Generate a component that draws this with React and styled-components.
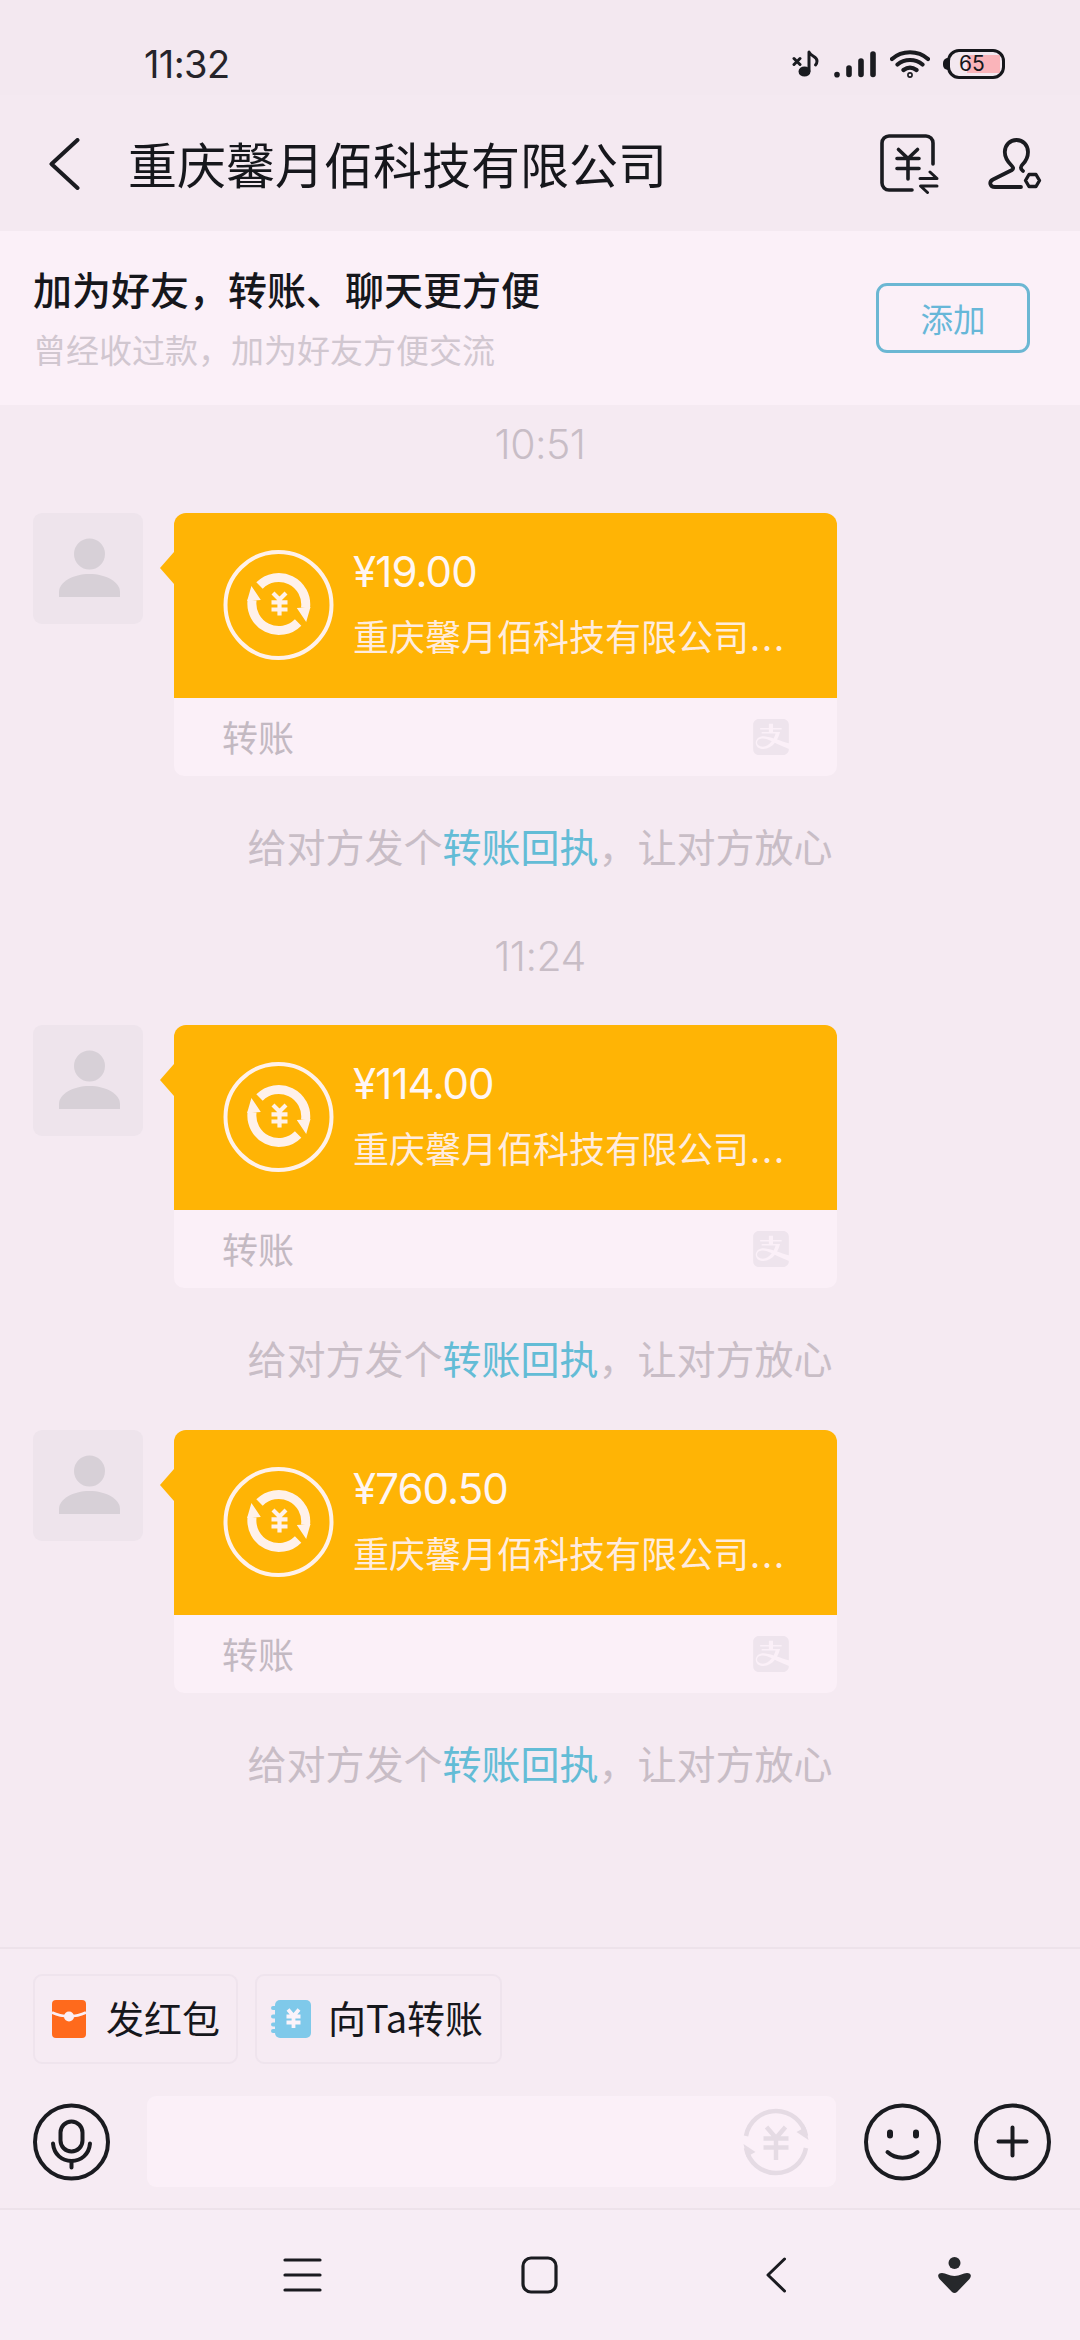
import React from 'react';
import styled, { createGlobalStyle } from 'styled-components';
import { SiAlipay } from 'react-icons/si';

const GlobalStyle = createGlobalStyle`
  * {
    box-sizing: border-box;
    margin: 0;
    padding: 0;
  }

  body {
    background-color: #f5eaf2;
    font-family: 'Noto Sans CJK SC', 'Noto Sans', sans-serif;
    color: #16171c;
  }

  button {
    font: inherit;
    color: inherit;
    background: none;
    border: none;
  }

  svg {
    display: block;
    flex-shrink: 0;
  }
`;

const Screen = styled.div`
  width: 1080px;
  height: 2340px;
  display: flex;
  flex-direction: column;
  overflow: hidden;
`;

const StatusBar = styled.div`
  height: 95px;
  padding: 0 75px 0 144px;
  display: flex;
  align-items: center;
  justify-content: space-between;
  background-color: #f3e8f0;
`;

const Clock = styled.span`
  font-family: 'Inter', sans-serif;
  font-size: 38px;
  line-height: 46px;
  padding-top: 33px;
  letter-spacing: -0.6px;
  color: #26242a;
`;

const StatusIcons = styled.div`
  display: flex;
  align-items: center;
  padding-top: 32px;

  svg + svg {
    margin-left: 14px;
  }
`;

const Battery = styled.div`
  display: flex;
  align-items: center;
  margin-left: 13px;

  &::before {
    content: '';
    width: 5px;
    height: 12px;
    margin-right: -1px;
    border-radius: 5px 0 0 5px;
    background-color: #16171c;
  }

  span {
    width: 58px;
    height: 30px;
    padding-left: 9px;
    border: 3px solid #16171c;
    border-radius: 12px;
    background: linear-gradient(#fab4ba, #fab4ba) 17px 3px / 33px 18px no-repeat;
    font-family: 'Inter', sans-serif;
    font-size: 21px;
    line-height: 24px;
  }
`;

const Header = styled.header`
  height: 136px;
  padding: 2px 38px 0 48px;
  display: flex;
  align-items: center;
  background-color: #f4e9f1;

  h1 {
    flex: 1;
    padding: 0 0 3px 48px;
    font-size: 49px;
    font-weight: 400;
    line-height: 72px;
  }
`;

const HeaderActions = styled.div`
  display: flex;
  align-items: center;
  gap: 49px;
`;

const Notice = styled.section`
  height: 174px;
  padding: 0 50px 0 33px;
  display: flex;
  align-items: center;
  justify-content: space-between;
  background-color: #fbf0f8;

  h2 {
    font-size: 39px;
    font-weight: 500;
    line-height: 62px;
    white-space: nowrap;
  }

  p {
    font-size: 33px;
    line-height: 60px;
    color: #d1c7d0;
    white-space: nowrap;
  }
`;

const AddButton = styled.button`
  width: 154px;
  height: 70px;
  border: 3px solid #6bb7d3;
  border-radius: 11px;
  color: #67b7d8;
  font-size: 32.5px;
  line-height: 58px;
`;

const Chat = styled.main`
  flex: 1;
  padding-top: 1px;
  background-color: #f5eaf2;
`;

const Time = styled.div`
  padding: 8px 0 39px;
  font-family: 'Inter', sans-serif;
  font-size: 41px;
  font-weight: 350;
  line-height: 60px;
  letter-spacing: -0.5px;
  text-align: center;
  color: #c8bdc6;
`;

const Message = styled.div`
  display: flex;
  align-items: flex-start;
  gap: 31px;
  padding-left: 33px;
`;

const Avatar = styled.div`
  width: 110px;
  height: 111px;
  border-radius: 9px;
  background-color: #eee4ec;
`;

const Bubble = styled.div`
  position: relative;
  width: 663px;

  &::before {
    content: '';
    position: absolute;
    left: -14px;
    top: 39px;
    border: solid transparent;
    border-width: 16px 14px 16px 0;
    border-right-color: #ffb405;
  }
`;

const BubbleBody = styled.div`
  height: 185px;
  padding-left: 49px;
  display: flex;
  align-items: center;
  gap: 19px;
  border-radius: 12px 12px 0 0;
  background-color: #ffb405;
`;

const Amount = styled.div`
  padding-top: 2px;
  font-family: 'Inter', sans-serif;
  font-size: 42px;
  line-height: 58px;
  letter-spacing: -0.9px;
  color: #fff6f3;
`;

const Payee = styled.div`
  padding-bottom: 2px;
  font-size: 36px;
  line-height: 68px;
  color: #ffecdf;

  span {
    letter-spacing: 2px;
    margin-left: 1px;
  }
`;

const BubbleFooter = styled.div`
  height: 78px;
  padding: 0 48px 0 48px;
  display: flex;
  align-items: center;
  justify-content: space-between;
  border-radius: 0 0 10px 10px;
  background-color: #fbf0f8;
  font-size: 36px;
  line-height: 74px;
  color: #c3b9c2;

  span {
    padding-bottom: 3px;
  }
`;

const Receipt = styled.p`
  margin: 41px 0 45px;
  font-size: 39px;
  line-height: 56px;
  text-align: center;
  color: #c8bdc6;

  span {
    color: #63bcd6;
  }
`;

const Composer = styled.footer`
  height: 263px;
  border-top: 2px solid #ede2ea;
  border-bottom: 2px solid #ede2ea;
  background-color: #f6ebf3;
`;

const Shortcuts = styled.div`
  display: flex;
  gap: 17px;
  padding: 25px 33px 0;
`;

const Shortcut = styled.button`
  width: ${({ $width }) => $width}px;
  height: 90px;
  padding-left: ${({ $start }) => $start}px;
  display: flex;
  align-items: center;
  gap: ${({ $gap }) => $gap}px;
  border: 2px solid #efe4ed;
  border-radius: 9px;
  font-size: 38px;
  line-height: 80px;
  white-space: nowrap;

  span {
    padding-bottom: 5px;
  }
`;

const InputRow = styled.div`
  display: flex;
  align-items: center;
  padding: 32px 28px 0 33px;
`;

const Input = styled.div`
  width: 689px;
  height: 91px;
  margin: 0 28px 0 37px;
  padding-right: 27px;
  display: flex;
  align-items: center;
  justify-content: flex-end;
  border-radius: 9px;
  background-color: #fbf0f8;
`;

const InputActions = styled.div`
  display: flex;
  gap: 33px;
`;

const NavBar = styled.nav`
  height: 130px;
  padding: 0 109px 0 283px;
  display: grid;
  grid-template-columns: 238px 244px 173px auto;
  align-items: center;
  background-color: #f7edf5;
`;

const Line = ({ w, h, stroke = 4, children }) => (
  <svg
    width={w}
    height={h}
    viewBox={`0 0 ${w} ${h}`}
    fill="none"
    stroke="#1a1b20"
    strokeWidth={stroke}
    strokeLinecap="round"
    strokeLinejoin="round"
  >
    {children}
  </svg>
);

const MutedNote = () => (
  <Line w={28} h={28} stroke={3}>
    <path d="M2 8.500l6 6M8 8.500l-6 6" />
    <path d="M17 21V2c2 5 8 4 8 9 0 1.500-.6 3-1.500 4" />
    <ellipse cx="12.500" cy="21.500" rx="4.500" ry="3.600" fill="#1a1b20" />
  </Line>
);

const Signal = () => (
  <Line w={42} h={28} stroke={5.6}>
    <path d="M3 24.500v.2M15 18v6.500M27 11v13.500M39 4v20.500" />
  </Line>
);

const Wifi = () => (
  <Line w={40} h={28} stroke={4.2}>
    <path d="M2 9c10-9 26-9 36 0M7.500 14.500c7-6 18-6 25 0M13.500 20c4-3 9-3 13 0" />
    <circle cx="20" cy="25" r=".8" />
  </Line>
);

const TransferBox = () => (
  <Line w={59} h={60} stroke={3.6}>
    <path d="M53 30V9a7 7 0 0 0-7-7H9a7 7 0 0 0-7 7v40a7 7 0 0 0 7 7h23" />
    <path d="M18.500 15.500l9.500 9 9.500-9M17 24.500h22M17 34.500h22M28 24.500V45" />
    <path d="M40 44.500h17l-7-6.500M57 52H40.500l7 6.500" strokeWidth="3" />
  </Line>
);

const Contact = () => (
  <Line w={54} h={52} stroke={3.8}>
    <path d="M33 49H7c-5 0-6.500-5-2-7.500L24 32c2-1.500 1-3-.5-4.500C19 23 16.800 19 16.800 14 16.800 7 22 2 28.500 2S40 7 40 14c0 5-2 9-5.500 12.500-2 2-2.500 4.500.5 6.500" />
    <path d="M41 36.500h7l3.500 6-3.500 6h-7l-3.500-6z" strokeWidth="3.400" />
  </Line>
);

const Person = () => (
  <svg width="110" height="111" viewBox="0 0 110 111" fill="#d7d0d7">
    <circle cx="56.500" cy="41" r="15.500" />
    <path d="M26 84V79c0-10 14-18 30.500-18S87 69 87 79v5z" />
  </svg>
);

const TransferBadge = () => (
  <svg width="111" height="111" viewBox="0 0 111 111" fill="none" stroke="#fff1ea">
    <circle cx="55.500" cy="55" r="53" strokeWidth="4" />
    <path d="M36.500 35.500a27 27 0 0 1 46 22.500M75.100 72.500a27 27 0 0 1-46-22.500" strokeWidth="9" />
    <path d="M73.800 58l13.700-1-4.300 15zM37.800 50l-13.700 1 4.300-15z" fill="#fff1ea" stroke="none" />
    <path d="M50 43l6.500 6.500 6.500-6.500M48.500 52.300h16M48.500 59.500h16M56.500 50v15.500" strokeWidth="4.200" />
  </svg>
);

const RedPacket = () => (
  <svg width="34" height="38" viewBox="0 0 34 38">
    <rect width="34" height="38" rx="4" fill="#ff6a1c" />
    <path d="M0 12.500c10 5 24 5 34 0" fill="none" stroke="#fbeff5" strokeWidth="2.800" />
    <circle cx="17" cy="16.500" r="5" fill="#fbeff5" />
  </svg>
);

const TransferBook = () => (
  <svg width="40" height="38" viewBox="0 0 40 38">
    <rect x="4" width="36" height="38" rx="5" fill="#7fc9ea" />
    <path d="M2 8h6M2 16.500h6M2 24.500h6M2 31h6" stroke="#7fc9ea" strokeWidth="4" strokeLinecap="round" />
    <path
      d="M17 9.500l5.500 6.500 5.500-6.500M15.500 16.500h14M15.500 22.500h14M22.500 16v12"
      fill="none"
      stroke="#fbf3fa"
      strokeWidth="3.800"
    />
  </svg>
);

const Microphone = () => (
  <Line w={77} h={78}>
    <circle cx="38.500" cy="39" r="36.500" />
    <rect x="27.500" y="18.500" width="22" height="30" rx="11" />
    <path d="M20 40.500c1 11 9 17.500 18.500 17.500S56 51.500 57 40.500M38.500 58v6.500" />
  </Line>
);

const Smile = () => (
  <Line w={77} h={78}>
    <circle cx="38.500" cy="39" r="36.500" />
    <path d="M26 29.500v3M52 29.500v3" strokeWidth="6" />
    <path d="M23.500 49c8 7.500 22 7.500 30 0" />
  </Line>
);

const Plus = () => (
  <Line w={77} h={78}>
    <circle cx="38.500" cy="39" r="36.500" />
    <path d="M24.500 38.500h28M38.500 24.500v28" />
  </Line>
);

const InputTransfer = () => (
  <svg width="66" height="68" viewBox="0 0 66 68" fill="none" stroke="#e5dbe4" strokeWidth="4.500">
    <path d="M3 28a30.500 30.500 0 0 1 60 0M63 40a30.500 30.500 0 0 1-60 0" />
    <path d="M65.500 32l-12-8 9-5zM.5 36l12 8-9 5z" fill="#e5dbe4" stroke="none" />
    <path d="M23.500 19l9.500 11 9.500-11M20.500 30.500h25M20.500 39.500h25M33 30v22" />
  </svg>
);

const TransferMessage = ({ amount }) => (
  <>
    <Message>
      <Avatar>
        <Person />
      </Avatar>
      <Bubble>
        <BubbleBody>
          <TransferBadge />
          <div>
            <Amount>¥{amount}</Amount>
            <Payee>
              重庆馨月佰科技有限公司<span>...</span>
            </Payee>
          </div>
        </BubbleBody>
        <BubbleFooter>
          <span>转账</span>
          <SiAlipay size={36} color="#eee4ed" />
        </BubbleFooter>
      </Bubble>
    </Message>
    <Receipt>
      给对方发个<span>转账回执</span>，让对方放心
    </Receipt>
  </>
);

const messages = [
  { time: '10:51', amount: '19.00' },
  { time: '11:24', amount: '114.00' },
  { amount: '760.50' },
];

const App = () => {
  return (
    <>
      <GlobalStyle />
      <Screen>
        <StatusBar>
          <Clock>11:32</Clock>
          <StatusIcons>
            <MutedNote />
            <Signal />
            <Wifi />
            <Battery>
              <span>65</span>
            </Battery>
          </StatusIcons>
        </StatusBar>

        <Header>
          <Line w={32} h={52}>
            <path d="M29.500 2L3.500 26l26 24" />
          </Line>
          <h1>重庆馨月佰科技有限公司</h1>
          <HeaderActions>
            <TransferBox />
            <Contact />
          </HeaderActions>
        </Header>

        <Notice>
          <div>
            <h2>加为好友，转账、聊天更方便</h2>
            <p>曾经收过款，加为好友方便交流</p>
          </div>
          <AddButton>添加</AddButton>
        </Notice>

        <Chat>
          {messages.map(({ time, amount }) => (
            <React.Fragment key={amount}>
              {time && <Time>{time}</Time>}
              <TransferMessage amount={amount} />
            </React.Fragment>
          ))}
        </Chat>

        <Composer>
          <Shortcuts>
            <Shortcut $width={205} $start={17} $gap={20}>
              <RedPacket />
              <span>发红包</span>
            </Shortcut>
            <Shortcut $width={247} $start={14} $gap={17}>
              <TransferBook />
              <span>向Ta转账</span>
            </Shortcut>
          </Shortcuts>
          <InputRow>
            <Microphone />
            <Input>
              <InputTransfer />
            </Input>
            <InputActions>
              <Smile />
              <Plus />
            </InputActions>
          </InputRow>
        </Composer>

        <NavBar>
          <Line w={39} h={36} stroke={3.2}>
            <path d="M2 3h35M2 18h35M2 33h35" />
          </Line>
          <Line w={37} h={38} stroke={3.2}>
            <rect x="2" y="2" width="33" height="34" rx="8" />
          </Line>
          <Line w={21} h={36} stroke={3}>
            <path d="M19.500 2L3 18l16.500 16" />
          </Line>
          <svg width="33" height="36" viewBox="0 0 33 36" fill="#26282b">
            <circle cx="16.500" cy="6" r="6" />
            <path d="M4 16c4 0 7 3 12.500 3S25 16 29 16c4 0 5 3 2.500 6L19 35c-1.500 1.300-3.500 1.300-5 0L1.500 22C-1 19 0 16 4 16z" />
          </svg>
        </NavBar>
      </Screen>
    </>
  );
};

export default App;
